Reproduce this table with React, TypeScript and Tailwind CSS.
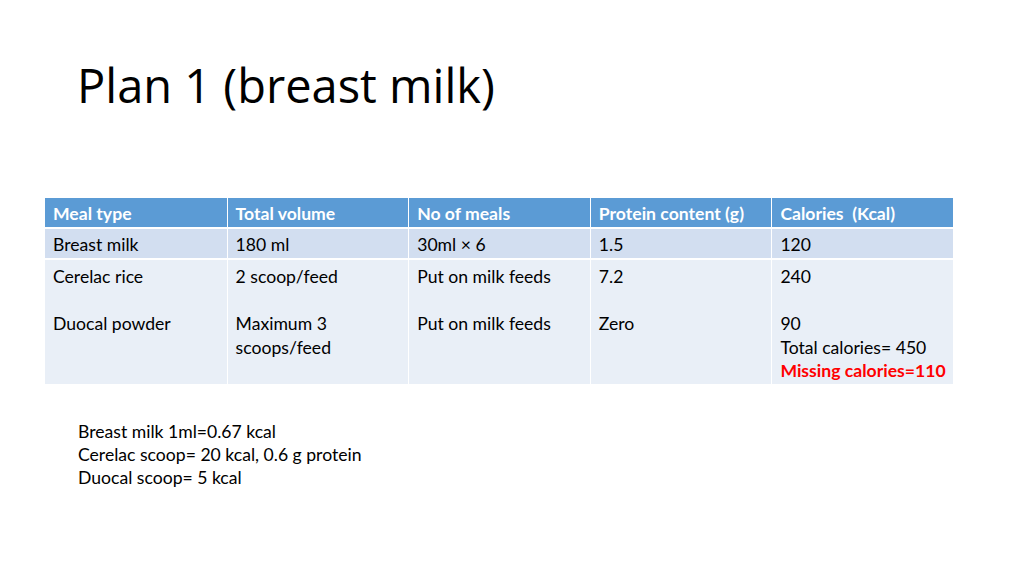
const rows = [
  { cells: ['Breast milk', '180 ml', '30ml × 6', '1.5', '120'] },
]

export default function App() {
  return (
    <div className="w-[1024px] h-[575px] bg-white overflow-hidden relative">
      <h1
        className="absolute left-[77px] top-[55px] text-[47px] leading-[60px] text-black"
        style={{ fontFamily: '"Open Sans", sans-serif' }}
      >
        Plan 1 (breast milk)
      </h1>

      <div
        className="absolute left-[45px] top-[198px] w-[908px] text-[17.6px] leading-[23.5px] text-black whitespace-nowrap"
        style={{ fontFamily: 'Lato, "Liberation Sans", sans-serif' }}
      >
        <div className="grid grid-cols-5 bg-[#5b9bd5] h-[31px] border-b-2 border-white">
          {['Meal type', 'Total volume', 'No of meals', 'Protein content (g)', 'Calories  (Kcal)'].map((h, i) => (
            <div key={i} className={`px-2 pt-[2px] flex items-center font-bold text-white whitespace-pre ${i > 0 ? 'border-l border-white' : ''}`}>
              {h}
            </div>
          ))}
        </div>
        {rows.map((r, ri) => (
          <div key={ri} className="grid grid-cols-5 bg-[#d2def0] h-[31px] border-b-2 border-white">
            {r.cells.map((c, i) => (
              <div key={i} className={`px-2 pt-[2px] flex items-center ${i > 0 ? 'border-l border-white' : ''}`}>
                {c}
              </div>
            ))}
          </div>
        ))}
        <div className="grid grid-cols-5 bg-[#e9eff7] h-[124px]">
          <div className="px-2 pt-[5px]">
            <div>Cerelac rice</div>
            <div>&nbsp;</div>
            <div>Duocal powder</div>
          </div>
          <div className="px-2 pt-[5px] border-l border-white">
            <div>2 scoop/feed</div>
            <div>&nbsp;</div>
            <div>Maximum 3</div>
            <div>scoops/feed</div>
          </div>
          <div className="px-2 pt-[5px] border-l border-white">
            <div>Put on milk feeds</div>
            <div>&nbsp;</div>
            <div>Put on milk feeds</div>
          </div>
          <div className="px-2 pt-[5px] border-l border-white">
            <div>7.2</div>
            <div>&nbsp;</div>
            <div>Zero</div>
          </div>
          <div className="px-2 pt-[5px] border-l border-white">
            <div>240</div>
            <div>&nbsp;</div>
            <div>90</div>
            <div>Total calories= 450</div>
            <div className="font-bold text-[#ff0000]">Missing calories=110</div>
          </div>
        </div>
      </div>

      <div
        className="absolute left-[78px] top-[420px] text-[17.6px] leading-[23px] text-black"
        style={{ fontFamily: 'Lato, "Liberation Sans", sans-serif' }}
      >
        <div>Breast milk 1ml=0.67 kcal</div>
        <div>Cerelac scoop= 20 kcal, 0.6 g protein</div>
        <div>Duocal scoop= 5 kcal</div>
      </div>
    </div>
  )
}
